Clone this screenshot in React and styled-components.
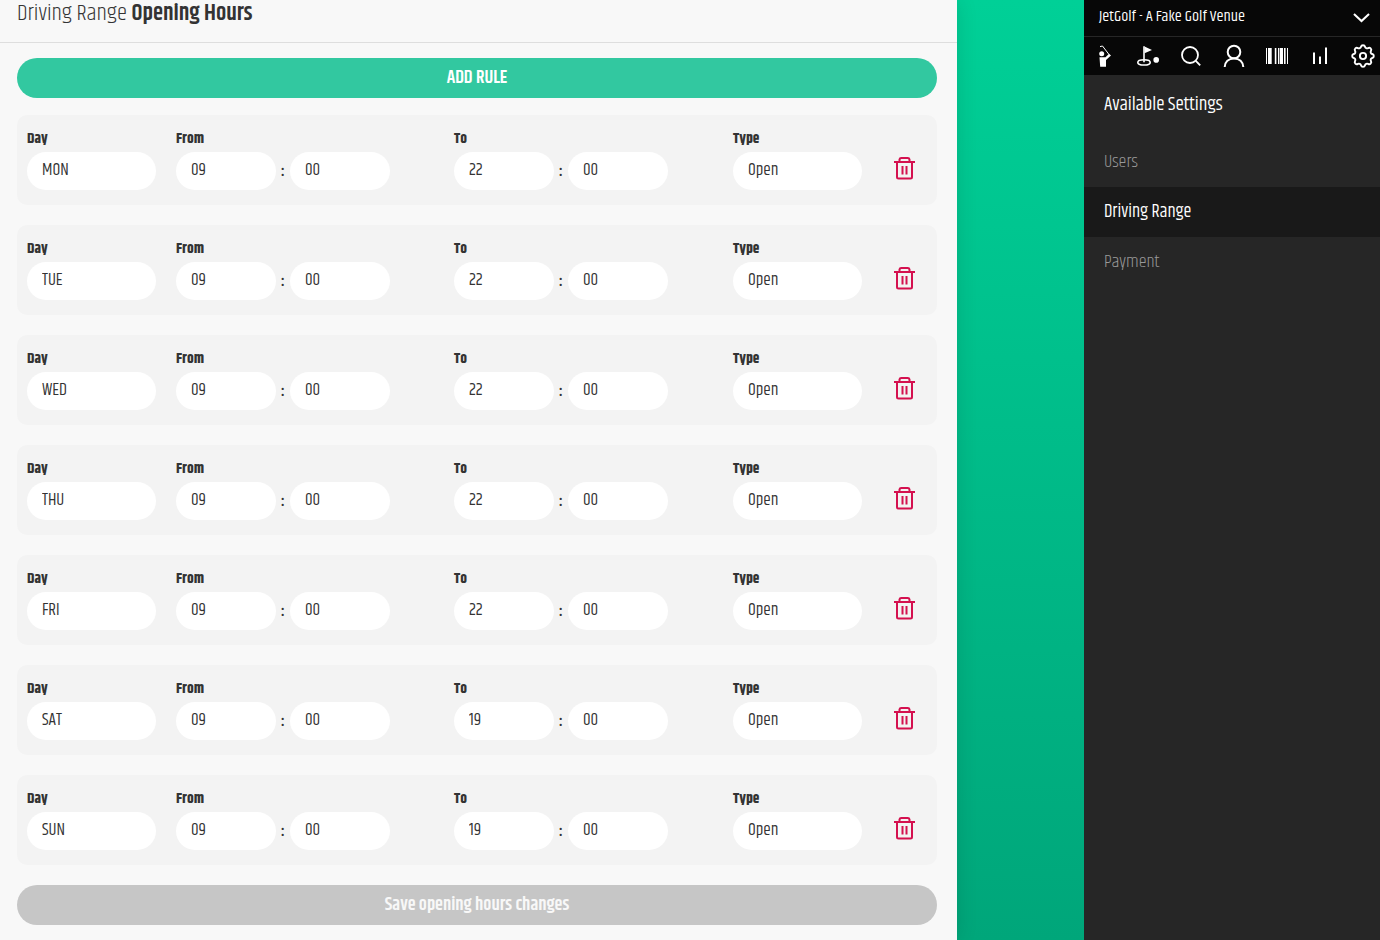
import React, { useState } from "react";
import styled, { createGlobalStyle } from "styled-components";

const GlobalStyles = createGlobalStyle`
  * {
    box-sizing: border-box;
  }
  body {
    margin: 0;
    color: #333;
    font-family: Khand, "Liberation Sans Narrow", "Liberation Sans", sans-serif;
    font-size: 16px;
  }
  button,
  select {
    font-family: inherit;
  }
`;

const PageStyles = styled.div`
  display: grid;
  grid-template-columns: minmax(0, 1fr) 127px 296px;
  min-height: 100vh;
  background: linear-gradient(#00d097, #00a67a);
`;

const Panel = styled.main`
  grid-column: 1;
  background: #f8f8f8;
  box-shadow: 0 0 20px rgba(0, 0, 0, 0.12);
`;

const PanelHeader = styled.header`
  padding: 0 17px 14px;
  border-bottom: 1px solid #dedede;
`;

const PanelTitle = styled.h1`
  margin: 0;
  font-size: 23px;
  line-height: 28px;
  font-weight: 300;
  strong {
    font-weight: 600;
  }
`;

const PanelBody = styled.form`
  display: flex;
  flex-direction: column;
  padding: 15px 20px 15px 17px;
`;

const WideButton = styled.button`
  height: 40px;
  padding: 0;
  border: 0;
  border-radius: 20px;
  background: ${(props) => (props.$muted ? "#c6c6c6" : "#32c8a0")};
  color: ${(props) => (props.$muted ? "#f8f8f8" : "#fff")};
  font-size: 18px;
  font-weight: 600;
  line-height: 20px;
`;

const RuleList = styled.div`
  display: flex;
  flex-direction: column;
  gap: 20px;
  margin: 17px 0 20px;
`;

const RuleCard = styled.div`
  display: grid;
  grid-template-columns: 129fr 258fr 259fr 129fr 45px;
  column-gap: 20px;
  padding: 15px 10px;
  border-radius: 10px;
  background: #f3f3f3;
`;

const Field = styled.div`
  display: flex;
  flex-direction: column;
  gap: 4px;
  min-width: 0;
`;

const FieldLabel = styled.label`
  font-size: 15px;
  font-weight: 700;
  line-height: 18px;
`;

const TimeGroup = styled.div`
  display: flex;
  align-items: center;
`;

const Colon = styled.span`
  width: 14px;
  font-weight: 600;
  text-align: center;
`;

const Select = styled.select`
  appearance: none;
  width: ${(props) => (props.$short ? "100px" : "100%")};
  height: 38px;
  padding: 0 15px 2px;
  border: 0;
  border-radius: 19px;
  background: #fff;
  color: #333;
  font-size: 17px;
  font-weight: 400;
`;

const DeleteButton = styled.button`
  display: flex;
  align-items: center;
  align-self: end;
  justify-content: center;
  height: 44px;
  padding: 0;
  border: 0;
  background: none;
  color: #d4104f;
`;

const Sidebar = styled.aside`
  grid-column: 3;
  background: #262626;
  color: #fff;
`;

const VenueButton = styled.button`
  display: flex;
  align-items: center;
  justify-content: space-between;
  width: 100%;
  height: 37px;
  padding: 0 9px 4px 15px;
  border: 0;
  border-bottom: 1px solid #262626;
  background: #070707;
  color: #fff;
  font-size: 16px;
  font-weight: 400;
  svg {
    margin-top: 2px;
  }
`;

const IconBar = styled.nav`
  display: flex;
  align-items: center;
  justify-content: space-between;
  height: 38px;
  padding: 0 5px 0 9px;
  background: #070707;
  a {
    display: flex;
    color: #fff;
  }
`;

const MenuTitle = styled.h2`
  margin: 0;
  padding: 18px 20px 20px;
  font-size: 19px;
  font-weight: 400;
  line-height: 24px;
`;

const MenuLink = styled.a`
  display: block;
  padding: 0 20px;
  background: ${(props) => (props.$active ? "#191919" : "transparent")};
  color: ${(props) => (props.$active ? "#fff" : "#999")};
  font-size: 18px;
  font-weight: ${(props) => (props.$active ? 400 : 300)};
  line-height: 50px;
  text-decoration: none;
`;

const Icon = ({ children, ...props }) => (
  <svg
    width="24"
    height="24"
    viewBox="0 0 24 24"
    fill="none"
    stroke="currentColor"
    strokeWidth="1.8"
    aria-hidden="true"
    {...props}
  >
    {children}
  </svg>
);

const TrashIcon = () => (
  <Icon strokeWidth="2">
    <path d="M1 6h21M6.500 6V3.500A1.800 1.800 0 0 1 8.300 2h6.400a1.800 1.800 0 0 1 1.800 1.500V6M4 6v15a1.500 1.500 0 0 0 1.500 1.500h12A1.500 1.500 0 0 0 19 21V6M9.500 10v8.500M13.500 10v8.500" />
  </Icon>
);

const GolferIcon = () => (
  <Icon>
    <circle cx="8.7" cy="9.8" r="2.5" fill="currentColor" stroke="none" />
    <path
      d="M6.500 13.200h6l3.500-3.500 2 1.800-5 4.500v6.800H7.200z"
      fill="currentColor"
      stroke="none"
    />
    <path d="M7 2.600 9.500 2l6.500 8.500" strokeWidth="1" />
  </Icon>
);

const CourseIcon = () => (
  <Icon>
    <ellipse cx="8" cy="18.4" rx="6.2" ry="2.6" strokeWidth="1.6" />
    <path d="M8 2.3v16" strokeWidth="1.6" />
    <path d="M8.500 2.500 16 6l-7.500 3.200z" fill="currentColor" stroke="none" />
    <circle cx="20.2" cy="15.9" r="2.8" fill="currentColor" stroke="none" />
  </Icon>
);

const SearchIcon = () => (
  <Icon>
    <circle cx="11" cy="11" r="8" />
    <path d="m16.8 16.8 4.4 4.6" />
  </Icon>
);

const UserIcon = () => (
  <Icon strokeWidth="2">
    <circle cx="12" cy="8" r="6.3" />
    <path d="M2.700 23c.3-5 3.800-8.600 9.300-8.600s9 3.600 9.300 8.600" />
  </Icon>
);

const BarcodeIcon = () => (
  <Icon fill="currentColor" stroke="none">
    <path d="M1 4h1v16H1zM3 4h3.700v16H3zM9.800 4h1.600v16H9.800zM13 4h1v16h-1zM14.600 4H18v16h-3.400zM19 4h1.600v16H19zM22 4h1v16h-1z" />
  </Icon>
);

const StatsIcon = () => (
  <Icon strokeWidth="2">
    <path d="M6 8.500V20M12 12.500V20M18 3.500V20" />
  </Icon>
);

const GearIcon = () => (
  <Icon viewBox="2 2 20 20" strokeWidth="1.600">
    <path d="M10.325 4.317c.426-1.756 2.924-1.756 3.350 0a1.724 1.724 0 0 0 2.573 1.066c1.543-.940 3.310.826 2.370 2.370a1.724 1.724 0 0 0 1.065 2.572c1.756.426 1.756 2.924 0 3.350a1.724 1.724 0 0 0-1.066 2.573c.940 1.543-.826 3.310-2.370 2.370a1.724 1.724 0 0 0-2.572 1.065c-.426 1.756-2.924 1.756-3.350 0a1.724 1.724 0 0 0-2.573-1.066c-1.543.940-3.310-.826-2.370-2.370a1.724 1.724 0 0 0-1.065-2.572c-1.756-.426-1.756-2.924 0-3.350a1.724 1.724 0 0 0 1.066-2.573c-.940-1.543.826-3.310 2.370-2.370 1 .608 2.296.070 2.572-1.065z" />
    <circle cx="12" cy="12" r="2.600" />
  </Icon>
);

const days = ["MON", "TUE", "WED", "THU", "FRI", "SAT", "SUN"];
const hours = Array.from({ length: 24 }, (_, i) => String(i).padStart(2, "0"));
const minutes = ["00", "15", "30", "45"];
const types = ["Open", "Closed"];

const initialRules = days.map((day, i) => ({
  id: i,
  day,
  from: "09",
  to: i > 4 ? "19" : "22",
}));

const navItems = [
  ["Players", GolferIcon],
  ["Course", CourseIcon],
  ["Search", SearchIcon],
  ["Account", UserIcon],
  ["Barcode", BarcodeIcon],
  ["Statistics", StatsIcon],
  ["Settings", GearIcon],
];

const Options = ({ items, ...props }) => (
  <Select {...props}>
    {items.map((item) => (
      <option key={item}>{item}</option>
    ))}
  </Select>
);

const TimeField = ({ id, label, hour }) => (
  <Field>
    <FieldLabel htmlFor={id}>{label}</FieldLabel>
    <TimeGroup>
      <Options id={id} $short items={hours} defaultValue={hour} />
      <Colon>:</Colon>
      <Options
        $short
        items={minutes}
        defaultValue="00"
        aria-label={`${label} minutes`}
      />
    </TimeGroup>
  </Field>
);

const Rule = ({ rule, onDelete }) => (
  <RuleCard>
    <Field>
      <FieldLabel htmlFor={`day-${rule.id}`}>Day</FieldLabel>
      <Options id={`day-${rule.id}`} items={days} defaultValue={rule.day} />
    </Field>
    <TimeField id={`from-${rule.id}`} label="From" hour={rule.from} />
    <TimeField id={`to-${rule.id}`} label="To" hour={rule.to} />
    <Field>
      <FieldLabel htmlFor={`type-${rule.id}`}>Type</FieldLabel>
      <Options id={`type-${rule.id}`} items={types} defaultValue="Open" />
    </Field>
    <DeleteButton type="button" aria-label="Delete rule" onClick={onDelete}>
      <TrashIcon />
    </DeleteButton>
  </RuleCard>
);

const App = () => {
  const [rules, setRules] = useState(initialRules);
  const addRule = () => {
    setRules([...rules, { id: Date.now(), day: "MON", from: "09", to: "22" }]);
  };
  return (
    <PageStyles>
      <GlobalStyles />
      <Panel>
        <PanelHeader>
          <PanelTitle>
            Driving Range <strong>Opening Hours</strong>
          </PanelTitle>
        </PanelHeader>
        <PanelBody onSubmit={(e) => e.preventDefault()}>
          <WideButton type="button" onClick={addRule}>
            ADD RULE
          </WideButton>
          <RuleList>
            {rules.map((rule) => (
              <Rule
                key={rule.id}
                rule={rule}
                onDelete={() =>
                  setRules(rules.filter((item) => item.id !== rule.id))
                }
              />
            ))}
          </RuleList>
          <WideButton $muted type="submit" disabled>
            Save opening hours changes
          </WideButton>
        </PanelBody>
      </Panel>
      <Sidebar>
        <VenueButton type="button">
          JetGolf - A Fake Golf Venue
          <Icon width="19" height="19" strokeWidth="2.600">
            <path d="m2.500 7.500 9.500 9 9.500-9" />
          </Icon>
        </VenueButton>
        <IconBar>
          {navItems.map(([label, NavIcon]) => (
            <a key={label} href="#" aria-label={label}>
              <NavIcon />
            </a>
          ))}
        </IconBar>
        <MenuTitle>Available Settings</MenuTitle>
        <MenuLink href="#">Users</MenuLink>
        <MenuLink href="#" $active>
          Driving Range
        </MenuLink>
        <MenuLink href="#">Payment</MenuLink>
      </Sidebar>
    </PageStyles>
  );
};

export default App;
